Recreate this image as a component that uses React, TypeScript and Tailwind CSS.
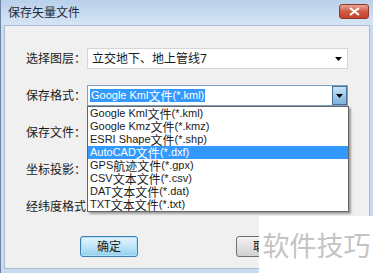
import React from "react";

const font = { fontFamily: '"Noto Sans", "Noto Sans CJK SC", sans-serif' };
const latin = { fontFamily: '"Liberation Sans", "Noto Sans CJK SC", sans-serif' };

function Arrow({ color = "#000" }: { color?: string }) {
  return (
    <svg width="7" height="4" viewBox="0 0 7 4">
      <path d="M0 0H7L3.5 4Z" fill={color} />
    </svg>
  );
}

function Mixed({ text }: { text: string }) {
  const parts = text.split(/([\u4e00-\u9fff]+)/).filter((p) => p.length > 0);
  return (
    <>
      {parts.map((p, i) =>
        /[\u4e00-\u9fff]/.test(p) ? (
          <span key={i} className="text-[12px]" style={{ fontFamily: '"Noto Sans CJK SC", sans-serif' }}>
            {p}
          </span>
        ) : (
          <span key={i} className="text-[11px]">
            {p}
          </span>
        )
      )}
    </>
  );
}

const items = [
  "Google Kml文件(*.kml)",
  "Google Kmz文件(*.kmz)",
  "ESRI Shape文件(*.shp)",
  "AutoCAD文件(*.dxf)",
  "GPS航迹文件(*.gpx)",
  "CSV文本文件(*.csv)",
  "DAT文本文件(*.dat)",
  "TXT文本文件(*.txt)",
];

export default function App() {
  return (
    <div
      className="relative w-[373px] h-[273px] overflow-hidden flex flex-col bg-[#c9dbef] border-l border-[#6d84a3] text-[12px] text-[#1a1a1a]"
      style={font}
    >
      {/* title bar */}
      <div className="h-[25px] shrink-0 flex items-center justify-between pl-[7px] pr-[4px] bg-gradient-to-b from-[#b9d0eb] to-[#d6e5f5]">
        <span className="text-[12px] text-[#1e2a3a]">保存矢量文件</span>
        <div className="w-[30px] h-[15px] mt-[-3px] rounded-[3px] border border-[#8a3a2c] bg-gradient-to-b from-[#e8a493] via-[#cf5a42] to-[#c7412b] flex items-center justify-center">
          <svg width="11" height="9" viewBox="0 0 11 9">
            <path d="M1 1L10 8M10 1L1 8" stroke="#fff" strokeWidth="2.2" />
          </svg>
        </div>
      </div>

      {/* client */}
      <div className="relative flex-1 mx-[3px] mb-[4px] bg-[#f0f0f0] border border-[#a9bcd3] flex flex-col">
        <div className="flex flex-col pl-[21px] pt-[22px] gap-[16px]">
          <div className="flex items-center h-[21px]">
            <span className="w-[61px] whitespace-nowrap">选择图层：</span>
            <div className="w-[261px] h-[21px] bg-white border border-[#d5d5d5] flex items-center justify-between pl-[4px] pr-[5px]">
              <span>立交地下、地上管线7</span>
              <Arrow />
            </div>
          </div>
          <div className="flex items-center h-[21px]">
            <span className="w-[61px] whitespace-nowrap">保存格式：</span>
            <div className="w-[261px] h-[21px] bg-white border border-[#7ea1c7] flex items-center justify-between pl-[2px]">
              <span className="bg-[#3399ff] text-white px-[1px] leading-[13px] h-[13px] flex items-center" style={latin}>
                <Mixed text="Google Kml文件(*.kml)" />
              </span>
              <div className="w-[15px] h-[19px] border border-[#4a6f92] bg-gradient-to-b from-[#c6e2f6] to-[#7fb3dc] flex items-center justify-center">
                <Arrow />
              </div>
            </div>
          </div>
          <div className="flex items-center h-[21px]">
            <span className="w-[61px] whitespace-nowrap">保存文件：</span>
          </div>
          <div className="flex items-center h-[21px]">
            <span className="w-[61px] whitespace-nowrap">坐标投影：</span>
          </div>
          <div className="flex items-center h-[21px]">
            <span className="w-[61px] whitespace-nowrap">经纬度格式</span>
          </div>
        </div>

        {/* buttons */}
        <div className="flex pl-[75px] pt-[19px] gap-[98px]">
          <div className="w-[58px] h-[21px] rounded-[3px] border border-[#3c7fb1] bg-gradient-to-b from-[#e5f5fc] via-[#bfe5f7] to-[#8fd0ef] flex items-center justify-center shadow-[inset_0_0_0_1px_#aee0f6]">
            确定
          </div>
          <div className="w-[58px] h-[21px] rounded-[3px] border border-[#707070] bg-gradient-to-b from-[#f2f2f2] to-[#d0d0d0] flex items-center justify-center">
            取消
          </div>
        </div>

        {/* dropdown list overlay */}
        <div
          className="absolute left-[82px] top-[80px] w-[262px] border border-[#646464] bg-white shadow-[2px_2px_2px_rgba(0,0,0,0.35)] flex flex-col"
          style={latin}
        >
          {items.map((t, i) => (
            <div
              key={t}
              className={
                i === 3
                  ? "h-[13px] leading-[13px] pl-[2px] bg-[#3399ff] text-white flex items-center whitespace-nowrap"
                  : "h-[13px] leading-[13px] pl-[2px] flex items-center whitespace-nowrap"
              }
            >
              <Mixed text={t} />
            </div>
          ))}
        </div>
      </div>

      {/* watermark overlay */}
      <div className="absolute left-[258px] top-[216px] w-[115px] h-[57px] bg-white flex items-center justify-center pt-[1px]">
        <span className="text-[27px] text-[#c4c4c4]" style={{ fontFamily: '"Noto Sans CJK SC", sans-serif' }}>
          软件技巧
        </span>
      </div>
    </div>
  );
}
